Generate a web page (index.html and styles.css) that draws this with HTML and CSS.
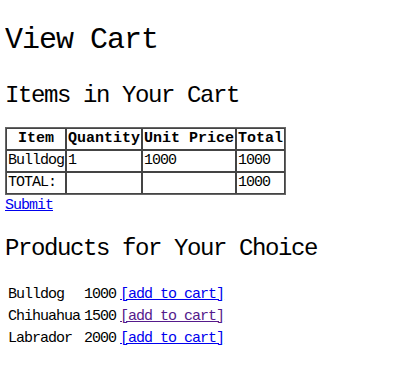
FILE: index.html
```html
<!DOCTYPE html>
<html lang="en">
<head>
  <meta charset="UTF-8">
  <title>View Cart</title>
  <link rel="stylesheet" href="styles.css">
</head>
<body>
  <h1>View Cart</h1>

  <h2 class="cart-title">Items in Your Cart</h2>
  <table class="cart">
    <tr>
      <th>Item</th>
      <th>Quantity</th>
      <th>Unit Price</th>
      <th>Total</th>
    </tr>
    <tr>
      <td>Bulldog</td>
      <td>1</td>
      <td>1000</td>
      <td>1000</td>
    </tr>
    <tr>
      <td>TOTAL:</td>
      <td></td>
      <td></td>
      <td>1000</td>
    </tr>
  </table>
  <div class="submit"><a href="#submit">Submit</a></div>

  <h2 class="products-title">Products for Your Choice</h2>
  <table class="products">
    <tr>
      <td>Bulldog</td>
      <td>1000</td>
      <td><a href="#add-bulldog">[add to cart]</a></td>
    </tr>
    <tr>
      <td>Chihuahua</td>
      <td>1500</td>
      <td><a class="visited" href="#add-chihuahua">[add to cart]</a></td>
    </tr>
    <tr>
      <td>Labrador</td>
      <td>2000</td>
      <td><a href="#add-labrador">[add to cart]</a></td>
    </tr>
  </table>
</body>
</html>
```

FILE: styles.css
```css
body {
  font-family: "Liberation Mono", "DejaVu Sans Mono", monospace;
  font-size: 15px;
  letter-spacing: -1px;
  line-height: 18px;
  color: #000;
  background: #fff;
  margin: 0 5px;
}
h1 {
  font-size: 30px;
  font-weight: normal;
  letter-spacing: -1px;
  line-height: 36px;
  margin: 22px 0 0;
}
h2 {
  font-size: 24px;
  font-weight: normal;
  letter-spacing: -1.4px;
  line-height: 28px;
}
.cart-title {
  margin: 24px 0 17px;
}
.submit {
  margin-top: 2px;
}
.products-title {
  margin: 20px 0 20px;
}
a {
  color: #0000ee;
}
a.visited {
  color: #551a8b;
}
.cart {
  border-collapse: separate;
  border-spacing: 0;
  border: 1px solid #666;
}
.cart th,
.cart td {
  border: 1px solid #444;
  padding: 1px;
  line-height: 18px;
}
.cart th {
  font-weight: bold;
  letter-spacing: 0;
  text-align: center;
}
.cart td {
  text-align: left;
}
.products {
  border-collapse: separate;
  border-spacing: 2px;
}
.products td {
  padding: 1px;
  line-height: 18px;
}
```
